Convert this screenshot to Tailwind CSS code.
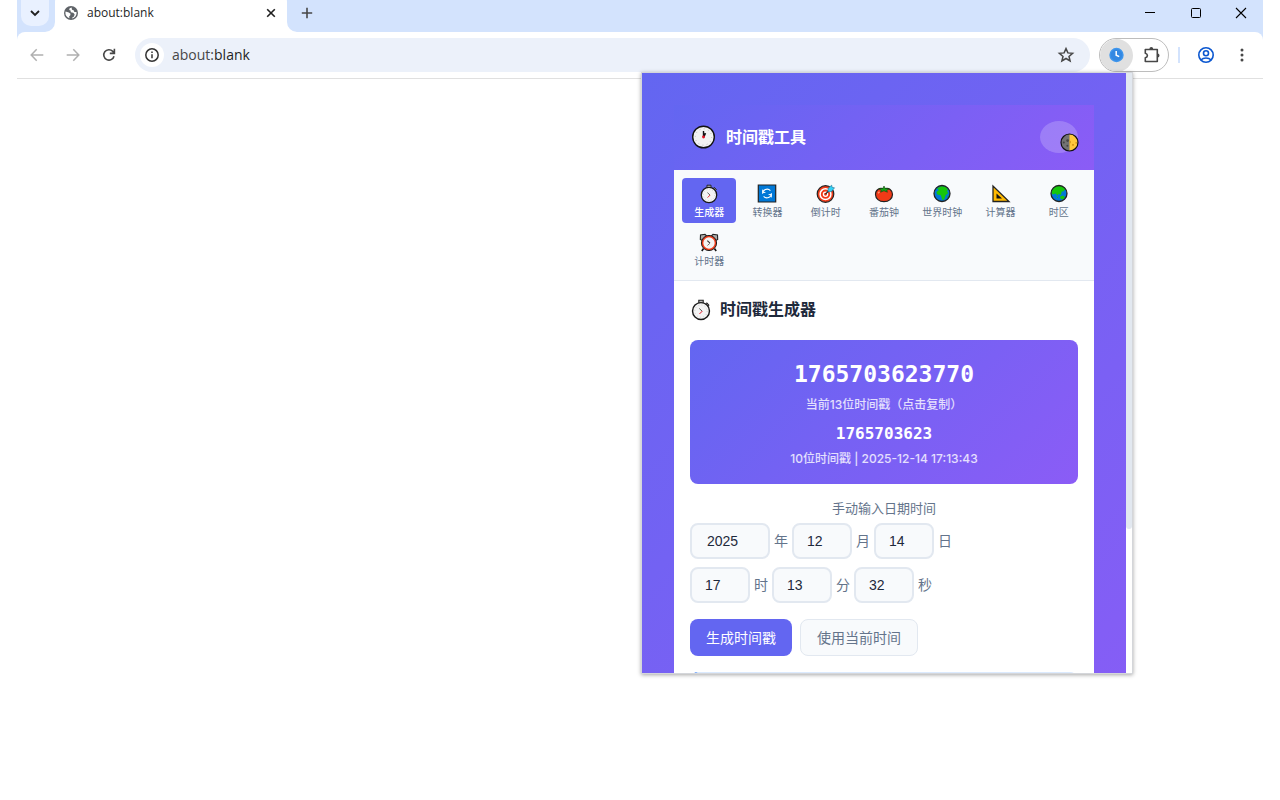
<!DOCTYPE html>
<html lang="zh-CN">
<head>
    <meta charset="UTF-8">
    <meta name="viewport" content="width=device-width, initial-scale=1.0">
    <title>时间戳工具</title>
    <script src="https://cdn.jsdelivr.net/npm/@tailwindcss/browser@4"></script>
</head>
<body class="bg-white min-h-screen overflow-hidden px-[17px] font-['Inter','Noto_Sans_CJK_SC',sans-serif]">
    <!-- Shared icons -->
    <svg class="hidden">
        <symbol id="stopwatch" viewBox="0 0 20 20">
            <path d="M8 1.200h4v2.600H8z" fill="#bbb" stroke="#222" stroke-width="1"/>
            <path d="M15.200 3.400l2.200 2-1.200 1.400-2.200-1.800z" fill="#999" stroke="#222" stroke-width=".9"/>
            <circle cx="10" cy="11" r="7.700" fill="#f4f4f4" stroke="#1a1a1a" stroke-width="1.300"/>
            <circle cx="10" cy="11" r="5.600" fill="none" stroke="#ccc" stroke-width=".9" stroke-dasharray=".9 2"/>
            <path d="M8.400 8.600l2.600 2.400" stroke="#555" stroke-width=".9"/>
            <path d="M11.200 11l-2.600 2.600" stroke="#e81224" stroke-width=".9"/>
        </symbol>
    </svg>

    <!-- Browser window -->
    <div class="bg-[#d3e3fd] font-['Open_Sans',sans-serif]">
        <div class="flex h-8 overflow-hidden">
            <button aria-label="搜索标签页" class="ml-1 w-7 h-[26px] rounded-b-[10px] bg-[#e9f1ff] flex items-center justify-center">
                <svg class="size-3" viewBox="0 0 12 12" fill="none" stroke="#1f1f1f" stroke-width="1.8"><path d="M2 4l4 4 4-4"/></svg>
            </button>
            <div class="relative ml-1.5 w-58 -mt-2 h-10 pt-2 bg-white rounded-t-[10px]">
                <svg class="absolute -left-2.5 bottom-0 size-2.5" viewBox="0 0 10 10" fill="#fff"><path d="M10 0v10H0A10 10 0 0 0 10 0z"/></svg>
                <svg class="absolute -right-2.5 bottom-0 size-2.5" viewBox="0 0 10 10" fill="#fff"><path d="M0 0v10h10A10 10 0 0 1 0 0z"/></svg>
                <div class="flex h-[25px] items-center pl-[9px] pr-2.5">
                    <svg class="size-3.5" viewBox="0 0 14 14"><circle cx="7" cy="7" r="7" fill="#5f6368"/><path d="M7.6 1.4L5.6 2.2 5.2 4l1.4.6.2 1.6 2.4.6 1.4 1.4-.6 2.2-1.6 1.2-.6 1A5.6 5.6 0 0 0 12.5 6L10.4 6 9.6 4.2 8 3.8z M1.6 5.4l3.2 1 1.8 1.400-.4 1.600-1 .8.2 2A5.6 5.6 0 0 1 1.400 6.600z" fill="#fff"/></svg>
                    <span class="ml-[9px] flex-1 text-xs text-[#1f1f1f]">about:blank</span>
                    <button aria-label="关闭标签页">
                        <svg class="size-3" viewBox="0 0 12 12" stroke="#1f1f1f" stroke-width="1.600"><path d="M2.200 2.200l7.600 7.600M9.800 2.200l-7.600 7.600"/></svg>
                    </button>
                </div>
            </div>
            <div class="flex flex-1 h-[25px] items-center">
                <button aria-label="新标签页" class="ml-3.5">
                    <svg class="size-3" viewBox="0 0 12 12" stroke="#474747" stroke-width="1.600"><path d="M6 .8v10.400M.8 6h10.400"/></svg>
                </button>
                <div class="ml-auto flex text-black">
                    <button aria-label="最小化" class="w-[46px] flex justify-center">
                        <svg class="size-3" viewBox="0 0 12 12" stroke="currentColor"><path d="M1 5.500h10"/></svg>
                    </button>
                    <button aria-label="最大化" class="w-[46px] flex justify-center">
                        <svg class="size-3" viewBox="0 0 12 12" fill="none" stroke="currentColor"><rect x="1.500" y="1.500" width="9" height="9" rx="1"/></svg>
                    </button>
                    <button aria-label="关闭" class="w-11 flex justify-center">
                        <svg class="size-3" viewBox="0 0 12 12" stroke="currentColor" stroke-width="1.100"><path d="M1 1l10 10M11 1L1 11"/></svg>
                    </button>
                </div>
            </div>
        </div>

        <div class="flex items-center h-[47px] bg-white rounded-t-lg border-b border-[#e0e0e0] pl-2.5 pr-[11px]">
            <div class="flex gap-4">
                <button aria-label="后退">
                    <svg class="size-5" viewBox="0 0 20 20" fill="none" stroke="#b0b0b0" stroke-width="1.500"><path d="M16.300 10H4.500M9.700 4.300L4.200 10l5.500 5.700"/></svg>
                </button>
                <button aria-label="前进">
                    <svg class="size-5" viewBox="0 0 20 20" fill="none" stroke="#b0b0b0" stroke-width="1.500"><path d="M3.700 10h11.800M10.300 4.300l5.500 5.700-5.500 5.700"/></svg>
                </button>
                <button aria-label="重新加载">
                    <svg class="size-5" viewBox="0 0 20 20" fill="none" stroke="#474747" stroke-width="1.600"><path d="M15 11.200A5.200 5.200 0 1 1 13.800 6.400L15.200 8M15.400 3.800v4.600h-4.600"/></svg>
                </button>
            </div>
            <div class="ml-4 flex flex-1 items-center h-[34px] rounded-full bg-[#ecf1fa] pl-[5px] pr-3.5">
                <button aria-label="网站信息" class="size-6 rounded-full bg-white flex items-center justify-center">
                    <svg class="size-4" viewBox="0 0 16 16" fill="none" stroke="#333" stroke-width="1.500"><circle cx="8" cy="8" r="6.200"/><path d="M8 7.200v4M8 4.600v1.500"/></svg>
                </button>
                <div class="relative ml-2 flex-1 text-sm">
                    <span class="pointer-events-none absolute inset-0 flex items-center text-[#1f1f1f]"><span class="text-[#474747]">about:</span>blank</span>
                    <input aria-label="地址" type="text" value="about:blank" class="w-full bg-transparent text-transparent outline-none">
                </div>
                <button aria-label="加入书签">
                    <svg class="size-5" viewBox="0 0 20 20" fill="none" stroke="#474747" stroke-width="1.500"><path d="M10 3.600l1.900 4.300 4.700.4-3.600 3.100 1.100 4.600-4.100-2.500L5.900 16 7 11.400 3.400 8.300l4.700-.4z"/></svg>
                </button>
            </div>
            <div class="ml-[9px] flex w-[70px] h-[34px] items-center rounded-full border border-[#bdbdbd] overflow-hidden">
                <button aria-label="时间戳工具" class="size-[33px] rounded-full bg-[#e0e0e0] flex items-center justify-center">
                    <svg class="size-4" viewBox="0 0 16 16" fill="none"><circle cx="7.500" cy="8" r="7.200" fill="#3f96ec"/><circle cx="7.500" cy="8" r="5.800" fill="#3388e2"/><path d="M7.200 4v4.200l3 1.500" stroke="#fff" stroke-width="1.500"/></svg>
                </button>
                <button aria-label="扩展程序" class="flex-1 flex justify-center">
                    <svg class="size-5" viewBox="0 0 20 20"><path d="M4.300 4.500h12v12h-12v-3.700c2.800-.8 2.800-3.800 0-4.600z" fill="none" stroke="#474747" stroke-width="1.600" stroke-linejoin="round"/><path d="M8.400 4a1.900 1.900 0 0 1 3.800 0zM16.600 8.600a1.900 1.900 0 0 1 0 3.800z" fill="#474747"/></svg>
                </button>
            </div>
            <span class="ml-[9px] w-0.5 h-4 bg-[#d3e3fd]"></span>
            <button aria-label="个人资料" class="ml-4">
                <svg class="size-5" viewBox="0 0 20 20" fill="none" stroke="#0b57d0" stroke-width="1.600"><circle cx="10" cy="10" r="7.200"/><circle cx="10" cy="8.200" r="2.500"/><path d="M4.800 15c2.800-2.600 7.600-2.600 10.400 0"/></svg>
            </button>
            <button aria-label="菜单" class="ml-4">
                <svg class="size-5" viewBox="0 0 20 20" fill="#474747"><circle cx="10" cy="5" r="1.500"/><circle cx="10" cy="10" r="1.500"/><circle cx="10" cy="15" r="1.500"/></svg>
            </button>
        </div>
    </div>

    <!-- Extension popup -->
    <div class="absolute top-[72px] right-[147px] flex w-[492px] h-[602px] overflow-hidden bg-white border border-[#d4d6da] shadow-[0_1px_4px_rgba(0,0,0,0.35)]">
        <div class="flex-1 h-[790px] p-8 bg-[linear-gradient(135deg,#6366f1,#8b5cf6)]">
            <div class="h-full bg-white">
                <header class="flex h-[65px] items-center justify-between px-4 pb-0.5 bg-[linear-gradient(135deg,#6366f1,#8b5cf6)]">
                    <h1 class="flex items-center gap-2 text-base font-semibold text-white">
                        <svg class="size-7" viewBox="0 0 28 28" fill="none"><circle cx="13.500" cy="14" r="10.800" fill="#f2f2f2" stroke="#111" stroke-width="1.400"/><circle cx="13.500" cy="14" r="8.200" stroke="#bbb" stroke-dasharray="1 3.290"/><path d="M13.500 14V8" stroke="#111" stroke-width="1.400"/><path d="M13.500 14l1.900-3.800" stroke="#111" stroke-width="1.800"/><circle cx="13.500" cy="14" r="1.400" fill="#e81224"/></svg>
                        时间戳工具
                    </h1>
                    <button aria-label="切换主题" class="relative w-[38px] h-8 rounded-[50%] bg-white/20">
                        <svg class="absolute left-5 top-3 size-[19px]" viewBox="0 0 19 19"><circle cx="9.500" cy="9.500" r="8.400" fill="#737373"/><path d="M9.500 1.100a8.400 8.400 0 0 1 0 16.800z" fill="#ffc83d"/><g fill="#444"><circle cx="7.600" cy="7.600" r="1.300"/><circle cx="3.800" cy="9.500" r="1"/><circle cx="7.400" cy="12.800" r="1"/></g><path d="M9.500 7.400a1.500 1.500 0 0 1 0 3zM12 11h2v1.700h-2zM15.500 9h1.500v1.800h-1.500z" fill="#d99a1c"/><circle cx="9.500" cy="9.500" r="8.500" fill="none" stroke="#111" stroke-width="1.200"/></svg>
                    </button>
                </header>

                <nav class="grid grid-cols-7 gap-1 p-2 bg-[#f8fafc] border-b border-[#e2e8f0] text-[10px] leading-4 text-[#64748b]">
                    <button class="flex flex-col items-center h-[45px] pt-1.5 rounded bg-[#6366f1] text-white font-medium">
                        <svg class="size-5"><use href="#stopwatch"/></svg>生成器
                    </button>
                    <button class="flex flex-col items-center h-[45px] pt-1.5">
                        <svg class="size-5" viewBox="0 0 20 20" fill="none"><path d="M1.300 1h17.400v17H1.300z" fill="#0078d7" stroke="#222" stroke-width="1.200"/><path d="M5.600 9.800A4.500 4.500 0 0 1 13.400 6.600M14.400 9.200A4.500 4.500 0 0 1 6.600 12.400" stroke="#fff" stroke-width="1.100"/><path d="M5.700 5.600v2.800h2.700M14.300 13.400v-2.800h-2.700" stroke="#fff"/></svg>转换器
                    </button>
                    <button class="flex flex-col items-center h-[45px] pt-1.5">
                        <svg class="size-5" viewBox="0 0 20 20" fill="none"><circle cx="9.500" cy="10" r="8.300" fill="#f03a17" stroke="#222" stroke-width="1.200"/><circle cx="9.500" cy="10.200" r="5.400" stroke="#fff" stroke-width="1.500"/><circle cx="9.500" cy="10.200" r="2.100" stroke="#fff" stroke-width="1.300"/><path d="M9.500 10.200L13 6.500" stroke="#222" stroke-width="1.200"/><path d="M11.800 7.800l.4-3.600 3.500-3 .4 2.200 2.400.4-3 3.700z" fill="#31d2f7" stroke="#166a8b" stroke-width=".6"/></svg>倒计时
                    </button>
                    <button class="flex flex-col items-center h-[45px] pt-1.5">
                        <svg class="size-5" viewBox="0 0 20 20"><path d="M10 5c5-1.800 8.600 1 8.500 5.500-.1 4-3.500 7.200-8.500 7.200s-8.400-3.200-8.500-7.200C1.400 6 5 3.200 10 5z" fill="#f03a17" stroke="#222" stroke-width="1.200"/><path d="M10 2l1 2.300 4.200.5-2.400 1.400.6 2-3.400-1.400-3.400 1.400.6-2-2.400-1.400 4.200-.5z" fill="#16a016" stroke="#12400f" stroke-width=".6"/><path d="M4 9.300l1.500-1.500" stroke="#ff9270" stroke-width="1.500"/></svg>番茄钟
                    </button>
                    <button class="flex flex-col items-center h-[45px] pt-1.5">
                        <svg class="size-5" viewBox="0 0 20 20"><circle cx="10" cy="9.500" r="8" fill="#0078d7"/><path d="M5 4.500l4-2.500 5 .8 2 3.200-1.200 1 1.400 2-2.600 2.200-1.200 4-2 1-1.600-5-3.600-.6L4.400 8l2.400-2z M16 11l.8 1.500-1.800 1.800z" fill="#16c60c"/><circle cx="10" cy="9.500" r="8" fill="none" stroke="#222" stroke-width="1.300"/></svg>世界时钟
                    </button>
                    <button class="flex flex-col items-center h-[45px] pt-1.5">
                        <svg class="size-5" viewBox="0 0 20 20"><path d="M2 2v15.500h16z" fill="#ffb900" stroke="#222" stroke-width="1.300"/><path d="M5.500 9.500v5h5.500z" fill="#111"/></svg>计算器
                    </button>
                    <button class="flex flex-col items-center h-[45px] pt-1.5">
                        <svg class="size-5" viewBox="0 0 20 20"><circle cx="10" cy="9.500" r="8" fill="#0078d7"/><path d="M3 5.500l4-3.700 6 .2 3.400 2.600-1.600 2.600-2 .4-1 3.600-2-1.400-1.400 1.600-1.600-2-3 1.200-1.600-2z M11 12.500l3-1 2 1.700-2 2.300-2.400-.8z M7.600 12l1.600 1.800-1 .2z" fill="#16c60c"/><circle cx="10" cy="9.500" r="8" fill="none" stroke="#222" stroke-width="1.300"/></svg>时区
                    </button>
                    <button class="flex flex-col items-center h-[45px] pt-1.5">
                        <svg class="size-5" viewBox="0 0 20 20" fill="none"><path d="M1.300 6.500L1.500 2 6 1.300l1.500 1.500-4.500 4.600zM18.700 6.500L18.500 2 14 1.300l-1.500 1.500 4.500 4.600z" fill="#aaa" stroke="#222" stroke-width="1.100"/><path d="M4.600 15.500L2.800 18M15.400 15.500l1.800 2.500" stroke="#111" stroke-width="1.600"/><circle cx="10" cy="10" r="7.600" fill="#f03a17" stroke="#222"/><circle cx="10" cy="10" r="5.700" fill="#f4f4f4"/><path d="M8.300 7.700l2.700 2.500" stroke="#333" stroke-width="1.100"/><path d="M11 10.200l-2.600 2.300" stroke="#777" stroke-width="1"/></svg>计时器
                    </button>
                </nav>

                <main class="px-4 py-[15px] text-sm text-[#64748b]">
                    <h2 class="flex items-center gap-2 text-base leading-[27px] font-semibold text-[#1e293b]">
                        <svg class="size-[22px]"><use href="#stopwatch"/></svg>时间戳生成器
                    </h2>

                    <section class="mt-[17px] rounded-lg py-4 text-center text-xs leading-[18px] text-white/80 font-medium bg-[linear-gradient(135deg,#6366f1,#8b5cf6)]">
                        <button class="block w-full font-['DejaVu_Sans_Mono',monospace] text-[23px] leading-[37px] font-bold text-white">1765703623770</button>
                        <p class="mt-[3px]">当前13位时间戳（点击复制）</p>
                        <button class="mt-2 block w-full font-['DejaVu_Sans_Mono',monospace] text-base leading-6 font-bold text-white">1765703623</button>
                        <p class="mt-1">10位时间戳 | 2025-12-14 17:13:43</p>
                    </section>

                    <p class="mt-[15px] text-center text-[13px] leading-[18px]">手动输入日期时间</p>
                    <div class="mt-1.5 flex items-center gap-1">
                        <input id="year" type="number" value="2025" class="w-20 h-9 px-[15px] rounded-lg border-2 border-[#e2e8f0] bg-[#f8fafc] font-['Liberation_Sans',sans-serif] text-[#1e293b]">
                        <label for="year">年</label>
                        <input id="month" type="number" value="12" class="w-15 h-9 pl-[13px] rounded-lg border-2 border-[#e2e8f0] bg-[#f8fafc] font-['Liberation_Sans',sans-serif] text-[#1e293b]">
                        <label for="month">月</label>
                        <input id="day" type="number" value="14" class="w-15 h-9 pl-[13px] rounded-lg border-2 border-[#e2e8f0] bg-[#f8fafc] font-['Liberation_Sans',sans-serif] text-[#1e293b]">
                        <label for="day">日</label>
                    </div>
                    <div class="mt-2 flex items-center gap-1">
                        <input id="hour" type="number" value="17" class="w-15 h-9 pl-[13px] rounded-lg border-2 border-[#e2e8f0] bg-[#f8fafc] font-['Liberation_Sans',sans-serif] text-[#1e293b]">
                        <label for="hour">时</label>
                        <input id="minute" type="number" value="13" class="w-15 h-9 pl-[13px] rounded-lg border-2 border-[#e2e8f0] bg-[#f8fafc] font-['Liberation_Sans',sans-serif] text-[#1e293b]">
                        <label for="minute">分</label>
                        <input id="second" type="number" value="32" class="w-15 h-9 pl-[13px] rounded-lg border-2 border-[#e2e8f0] bg-[#f8fafc] font-['Liberation_Sans',sans-serif] text-[#1e293b]">
                        <label for="second">秒</label>
                    </div>

                    <div class="mt-4 flex gap-2">
                        <button class="h-[37px] px-4 rounded-lg bg-[#6366f1] text-white">生成时间戳</button>
                        <button class="h-[37px] px-4 rounded-lg border border-[#e2e8f0] bg-[#f8fafc]">使用当前时间</button>
                    </div>

                    <div class="mt-4 h-20 rounded-lg border-l-4 border-[#3b82f6] bg-[#dbeafe]"></div>
                </main>
            </div>
        </div>
        <div class="w-1.5 bg-white">
            <div class="h-[456px] rounded-b-[3px] bg-[#e2e8f0]"></div>
        </div>
    </div>
</body>
</html>
